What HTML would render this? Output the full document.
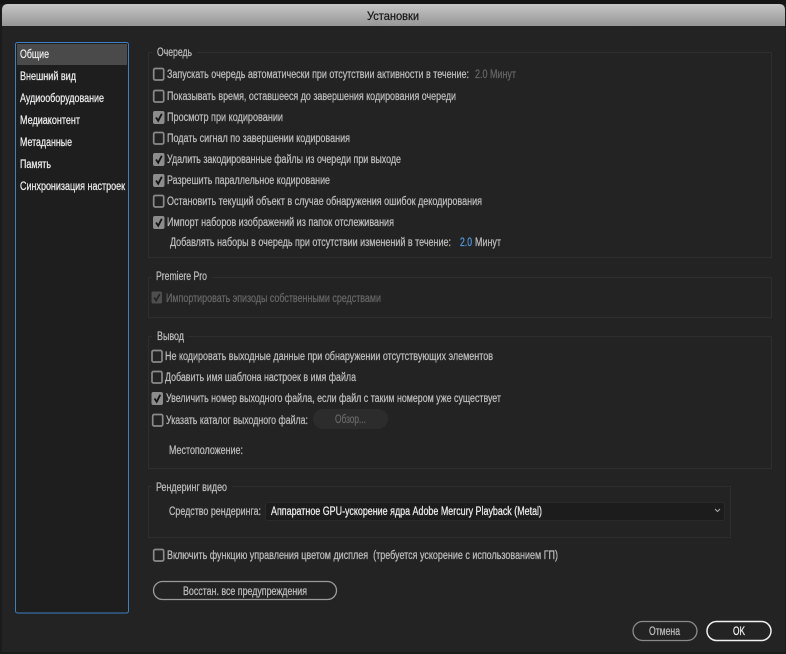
<!DOCTYPE html>
<html lang="ru"><head><meta charset="utf-8"><title>Установки</title>
<style>
html,body{margin:0;padding:0;background:#1b1b1b;width:786px;height:654px;overflow:hidden}
svg{display:block}
text{font-family:"Liberation Sans","DejaVu Sans",sans-serif;font-size:11.5px;fill:#c4c4c4;stroke-width:.25px}
.g{fill:none;stroke:#2e2e2e;stroke-width:1}
.l{fill:#bcbcbc;stroke:#bcbcbc}
.d{fill:#666;stroke:#666}
.w{fill:#ececec;stroke:#ececec}
.cb{fill:#232323;stroke:#8a8a8a;stroke-width:1.7}
.cc{fill:#8c8c8c;stroke:#8c8c8c;stroke-width:1}
.ck{fill:none;stroke:#141414;stroke-width:1.8}
</style></head><body>
<svg width="786" height="654" viewBox="0 0 786 654" xmlns="http://www.w3.org/2000/svg">
<defs><linearGradient id="t" x1="0" y1="0" x2="0" y2="1"><stop offset="0" stop-color="#c6c6c6"/><stop offset="1" stop-color="#969696"/></linearGradient></defs>
<rect width="786" height="654" fill="#1b1b1b"/>
<rect x="0" y="0" width="786" height="4" fill="#141414"/>
<path d="M2 652V10Q2 4 8 4H779Q785 4 785 10V652Z" fill="#232323"/>
<path d="M2 26V10Q2 4 8 4H779Q785 4 785 10V26Z" fill="url(#t)"/>
<text x="367" y="20" textLength="52" lengthAdjust="spacingAndGlyphs" style="fill:#1a1a1a;stroke:#1a1a1a;font-size:12px">Установки</text>

<rect x="15.500" y="42.500" width="113" height="570.500" rx="2" fill="#1e1e1e" stroke="#3f7fc4" stroke-width="1"/>
<rect x="17" y="44" width="110" height="21" fill="#4a4a4a"/>
<text class="w" x="20" y="58" textLength="29" lengthAdjust="spacingAndGlyphs">Общие</text>
<text class="w" x="20" y="80" textLength="56" lengthAdjust="spacingAndGlyphs">Внешний вид</text>
<text class="w" x="20" y="102" textLength="84" lengthAdjust="spacingAndGlyphs">Аудиооборудование</text>
<text class="w" x="20" y="124" textLength="60" lengthAdjust="spacingAndGlyphs">Медиаконтент</text>
<text class="w" x="20" y="146" textLength="52" lengthAdjust="spacingAndGlyphs">Метаданные</text>
<text class="w" x="20" y="168" textLength="31" lengthAdjust="spacingAndGlyphs">Память</text>
<text class="w" x="20" y="190" textLength="105" lengthAdjust="spacingAndGlyphs">Синхронизация настроек</text>

<path class="g" d="M152 52.500H148.500V257.500H771.500V52.500H197"/>
<path class="g" d="M152 277.500H148.500V317.500H771.500V277.500H212"/>
<path class="g" d="M152 336.500H148.500V468.500H771.500V336.500H188"/>
<path class="g" d="M152 486.500H148.500V537.500H730.500V486.500H232"/>

<text class="l" x="157" y="56" textLength="35" lengthAdjust="spacingAndGlyphs">Очередь</text>
<text class="l" x="156" y="280" textLength="51" lengthAdjust="spacingAndGlyphs">Premiere Pro</text>
<text class="l" x="157" y="340" textLength="27" lengthAdjust="spacingAndGlyphs">Вывод</text>
<text class="l" x="156" y="491" textLength="71" lengthAdjust="spacingAndGlyphs">Рендеринг видео</text>

<rect class="cb" x="153.700" y="68.500" width="10" height="11.500" rx="1.500"/>
<rect class="cb" x="153.700" y="90.500" width="10" height="11.500" rx="1.500"/>
<rect class="cc" x="153.500" y="111.500" width="10.500" height="12" rx="1.500"/><path class="ck" d="M156 117.500L158.200 120.700L161.800 113.800"/>
<rect class="cb" x="153.700" y="132.500" width="10" height="11.500" rx="1.500"/>
<rect class="cc" x="153.500" y="153.500" width="10.500" height="12" rx="1.500"/><path class="ck" d="M156 159.500L158.200 162.700L161.800 155.800"/>
<rect class="cc" x="153.500" y="174.500" width="10.500" height="12" rx="1.500"/><path class="ck" d="M156 180.500L158.200 183.700L161.800 176.800"/>
<rect class="cb" x="153.700" y="195.500" width="10" height="11.500" rx="1.500"/>
<rect class="cc" x="153.500" y="216.500" width="10.500" height="12" rx="1.500"/><path class="ck" d="M156 222.500L158.200 225.700L161.800 218.800"/>

<text x="167" y="78" textLength="302" lengthAdjust="spacingAndGlyphs" class="l">Запускать очередь автоматически при отсутствии активности в течение:</text>
<text x="475" y="78" textLength="41" lengthAdjust="spacingAndGlyphs" class="d">2.0 Минут</text>
<text x="167" y="100" textLength="289" lengthAdjust="spacingAndGlyphs" class="l">Показывать время, оставшееся до завершения кодирования очереди</text>
<text x="167" y="121" textLength="116" lengthAdjust="spacingAndGlyphs" class="l">Просмотр при кодировании</text>
<text x="167" y="142" textLength="183" lengthAdjust="spacingAndGlyphs" class="l">Подать сигнал по завершении кодирования</text>
<text x="167" y="163" textLength="234" lengthAdjust="spacingAndGlyphs" class="l">Удалить закодированные файлы из очереди при выходе</text>
<text x="167" y="184" textLength="163" lengthAdjust="spacingAndGlyphs" class="l">Разрешить параллельное кодирование</text>
<text x="167" y="205" textLength="315" lengthAdjust="spacingAndGlyphs" class="l">Остановить текущий объект в случае обнаружения ошибок декодирования</text>
<text x="167" y="226" textLength="227" lengthAdjust="spacingAndGlyphs" class="l">Импорт наборов изображений из папок отслеживания</text>
<text x="170" y="246" textLength="281" lengthAdjust="spacingAndGlyphs" class="l">Добавлять наборы в очередь при отсутствии изменений в течение:</text>
<text x="460" y="246" textLength="12" lengthAdjust="spacingAndGlyphs" style="fill:#4f9be0;stroke:#4f9be0">2.0</text>
<text x="475" y="246" textLength="26" lengthAdjust="spacingAndGlyphs" class="l">Минут</text>

<rect x="151.500" y="291.500" width="10.500" height="12" rx="1.500" fill="#4e4e4e"/><path d="M154 297.500L156.200 300.500L159.800 294" fill="none" stroke="#232323" stroke-width="1.700"/>
<text x="166" y="302" textLength="215" lengthAdjust="spacingAndGlyphs" class="d">Импортировать эпизоды собственными средствами</text>

<rect class="cb" x="152" y="350.500" width="10" height="11.500" rx="1.500"/>
<rect class="cb" x="152" y="371.500" width="10" height="11.500" rx="1.500"/>
<rect class="cc" x="152" y="392.500" width="10.500" height="12" rx="1.500"/><path class="ck" d="M154.500 398.500L156.700 401.700L160.300 394.800"/>
<rect class="cb" x="152.700" y="414.500" width="10" height="11.500" rx="1.500"/>
<text x="165" y="360" textLength="328" lengthAdjust="spacingAndGlyphs" class="l">Не кодировать выходные данные при обнаружении отсутствующих элементов</text>
<text x="165" y="381" textLength="191" lengthAdjust="spacingAndGlyphs" class="l">Добавить имя шаблона настроек в имя файла</text>
<text x="166" y="402" textLength="335" lengthAdjust="spacingAndGlyphs" class="l">Увеличить номер выходного файла, если файл с таким номером уже существует</text>
<text x="166" y="424" textLength="142" lengthAdjust="spacingAndGlyphs" class="l">Указать каталог выходного файла:</text>
<rect x="313" y="409" width="75" height="20" rx="10" fill="#2c2c2c"/>
<text x="335" y="423" textLength="31" lengthAdjust="spacingAndGlyphs" class="d">Обзор...</text>
<text x="169" y="454" textLength="74" lengthAdjust="spacingAndGlyphs" class="l">Местоположение:</text>

<text x="169" y="515" textLength="92" lengthAdjust="spacingAndGlyphs" class="l">Средство рендеринга:</text>
<rect x="265.500" y="502.500" width="459" height="18" rx="2" fill="#1c1c1c" stroke="#2a2a2a"/>
<text x="271" y="515" textLength="271" lengthAdjust="spacingAndGlyphs" class="w">Аппаратное GPU-ускорение ядра Adobe Mercury Playback (Metal)</text>
<path d="M715 509L717.500 511.500L720 509" fill="none" stroke="#aaa" stroke-width="1"/>

<rect class="cb" x="153.700" y="549.500" width="10" height="11.500" rx="1.500"/>
<text x="167" y="559" textLength="391" lengthAdjust="spacingAndGlyphs" class="l" xml:space="preserve">Включить функцию управления цветом дисплея  (требуется ускорение с использованием ГП)</text>

<rect x="153.500" y="581.500" width="183" height="18" rx="9" fill="none" stroke="#9a9a9a" stroke-width="1.300"/>
<text x="183" y="595" textLength="124" lengthAdjust="spacingAndGlyphs" class="l">Восстан. все предупреждения</text>

<rect x="633" y="621.500" width="64" height="19" rx="9.500" fill="none" stroke="#8a8a8a" stroke-width="1.300"/>
<text x="649" y="635" textLength="31" lengthAdjust="spacingAndGlyphs" class="l">Отмена</text>
<rect x="707" y="621.500" width="64" height="19" rx="9.500" fill="none" stroke="#f0f0f0" stroke-width="1.500"/>
<text x="733" y="635" textLength="12" lengthAdjust="spacingAndGlyphs" style="fill:#f0f0f0;stroke:#f0f0f0">OK</text>
</svg>
</body></html>
